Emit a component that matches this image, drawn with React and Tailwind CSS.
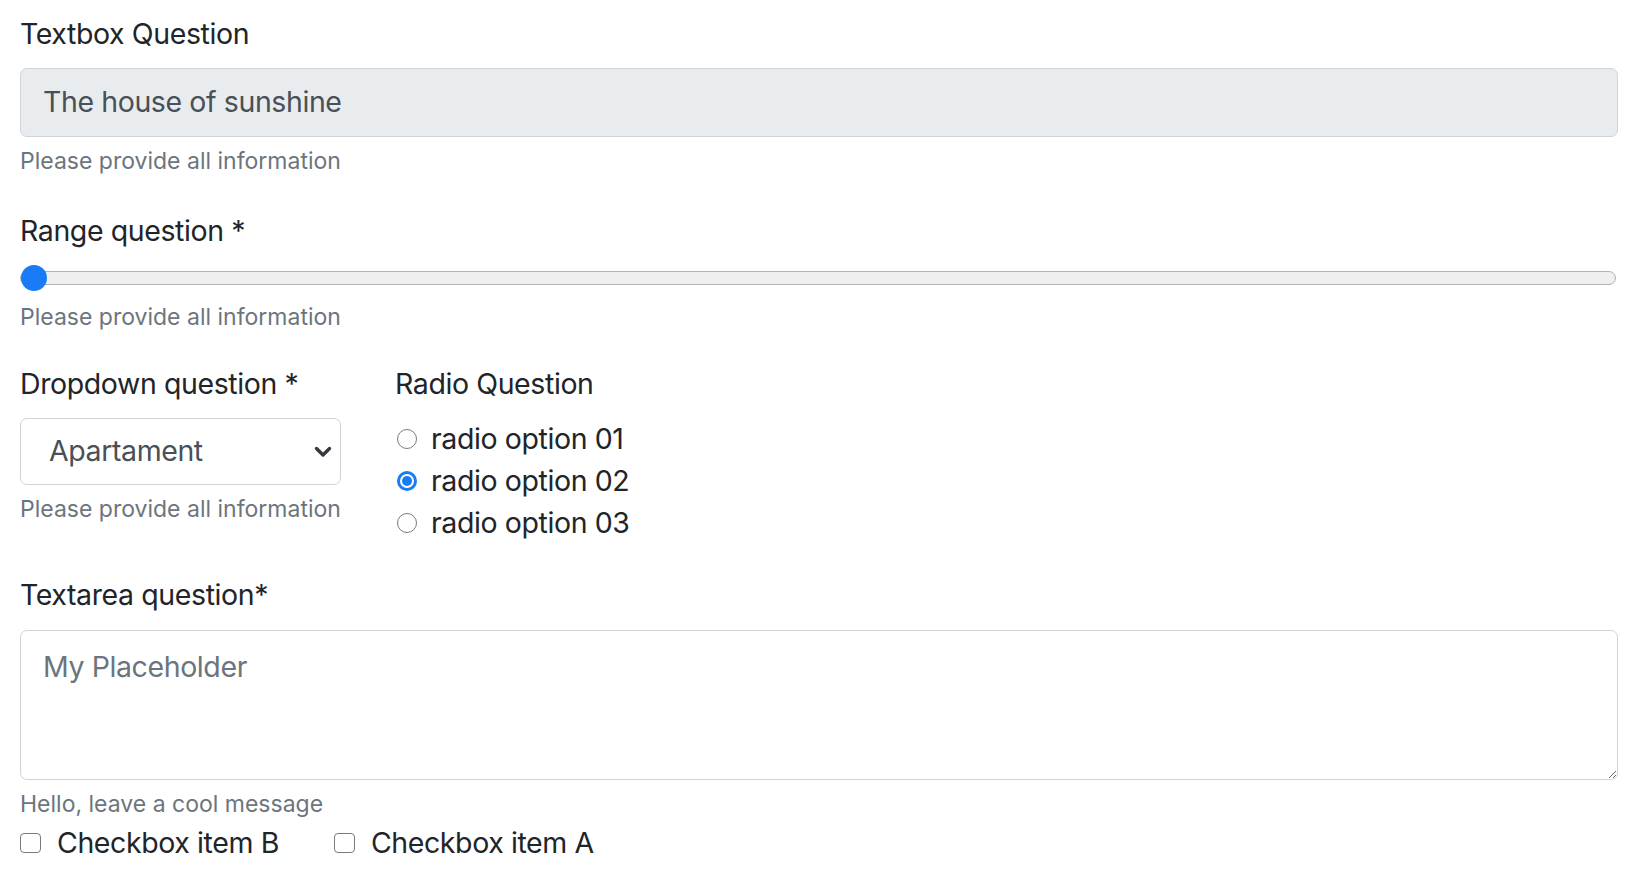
import React from 'react';

const font = { fontFamily: 'Inter, "Noto Sans", sans-serif' };

const Label = ({ children, className = '' }) => (
  <div className={`text-[28.5px] tracking-[-0.4px] leading-[43px] text-[#212529] ${className}`}>{children}</div>
);

const Help = ({ children, className = '' }) => (
  <div className={`text-[23px] leading-[34.5px] text-[#6c757d] ${className}`}>{children}</div>
);

const Radio = ({ label, checked }) => (
  <label className="flex items-center h-[42px] gap-[14px]">
    {checked ? (
      <span className="w-[20px] h-[20px] rounded-full bg-[#1a7bf6] flex items-center justify-center">
        <span className="w-[14px] h-[14px] rounded-full bg-white flex items-center justify-center">
          <span className="w-[10px] h-[10px] rounded-full bg-[#1a7bf6]" />
        </span>
      </span>
    ) : (
      <span className="w-[20px] h-[20px] rounded-full border-[1.5px] border-[#7a7a7a] bg-white" />
    )}
    <span className="text-[28.5px] tracking-[-0.4px] text-[#212529]">{label}</span>
  </label>
);

const Checkbox = ({ label }) => (
  <label className="flex items-center h-[43px] gap-[16px]">
    <span className="w-[21px] h-[20px] rounded-[4px] border-[1.5px] border-[#7a7a7a] bg-white" />
    <span className="text-[28.5px] tracking-[-0.4px] text-[#212529]">{label}</span>
  </label>
);

export default function App() {
  return (
    <div className="bg-white min-h-screen pl-[20px] pr-[22px] pt-[12px]" style={font}>
      {/* textbox */}
      <Label>Textbox Question</Label>
      <div className="mt-[13px] h-[69px] flex items-center px-[22px] bg-[#e9ecef] border border-[#ced4da] rounded-[7px] text-[28.5px] tracking-[-0.4px] text-[#495057]">
        The house of sunshine
      </div>
      <Help className="mt-[7px]">Please provide all information</Help>

      {/* range */}
      <Label className="mt-[30px]">Range question *</Label>
      <div className="mt-[13px] h-[26px] flex items-center">
        <div className="relative w-[1596px] h-[14px] rounded-full bg-[#efefef] border border-[#b2b2b2]">
          <span className="absolute left-0 top-[-7px] w-[26px] h-[26px] rounded-full bg-[#1a7bf6]" />
        </div>
      </div>
      <Help className="mt-[9px]">Please provide all information</Help>

      {/* dropdown + radio */}
      <div className="mt-[28px] flex gap-[54px]">
        <div className="w-[321px]">
          <Label>Dropdown question *</Label>
          <div className="mt-[13px] h-[67px] flex items-center justify-between pl-[28px] pr-[8px] border border-[#ced4da] rounded-[7px] text-[28.5px] tracking-[-0.4px] text-[#495057]">
            <span>Apartament</span>
            <svg width="18" height="12" viewBox="0 0 18 12">
              <path d="M2.5 2.5 L9 9 L15.5 2.5" fill="none" stroke="#343a40" strokeWidth="3.4" strokeLinecap="round" strokeLinejoin="round" />
            </svg>
          </div>
          <Help className="mt-[7px]">Please provide all information</Help>
        </div>
        <div>
          <Label>Radio Question</Label>
          <div className="mt-[13px] flex flex-col pl-[2px]">
            <Radio label="radio option 01" />
            <Radio label="radio option 02" checked />
            <Radio label="radio option 03" />
          </div>
        </div>
      </div>

      {/* textarea */}
      <Label className="mt-[29px]">Textarea question*</Label>
      <textarea
        className="mt-[14px] block w-full h-[150px] border border-[#ced4da] rounded-[7px] px-[22px] pt-[14px] text-[28.5px] tracking-[-0.4px] leading-[43px] text-[#495057] placeholder:text-[#6c757d] resize-y outline-none"
        placeholder="My Placeholder"
        style={font}
      />
      <Help className="mt-[7px]">Hello, leave a cool message</Help>

      {/* checkboxes */}
      <div className="flex gap-[55px] pl-[0px]">
        <Checkbox label="Checkbox item B" />
        <Checkbox label="Checkbox item A" />
      </div>
    </div>
  );
}
